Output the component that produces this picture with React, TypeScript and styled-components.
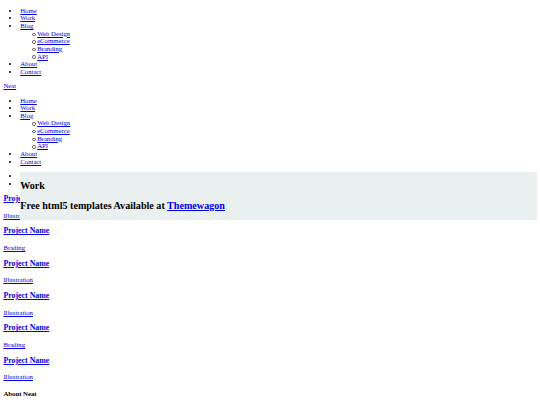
import { createGlobalStyle } from "styled-components"
import styled from "styled-components"

// the page is an unstyled template seen at 1280px wide, shrunk to 540
const K = 540 / 1280
const u = (n: number) => `${(n * K).toFixed(3)}px`

const GlobalStyle = createGlobalStyle`
  html {
    background: #fff;
  }
  body {
    margin: 0 ${u(8)} ${u(8)};
    font-family: "Liberation Serif", "Times New Roman", serif;
    font-size: ${u(16)};
    line-height: 1.13;
    color: #000;
  }
`

const Link = styled.a`
  color: #0000ee;
  text-decoration: underline;
  cursor: pointer;
`

const MenuList = styled.ul`
  margin: ${u(16)} 0;
  padding-left: ${u(40)};
  list-style: disc;
`

const SubMenu = styled.ul`
  margin: 0;
  padding-left: ${u(40)};
  list-style: none;
`

const SubItem = styled.li`
  position: relative;

  &::before {
    content: "";
    position: absolute;
    left: -4.8px;
    top: 2.9px;
    width: 1.6px;
    height: 1.6px;
    border: 0.6px solid #555;
    border-radius: 50%;
  }
`

const Logo = styled.div`
  display: block;
`

const Slider = styled.ul`
  margin: ${u(16)} 0;
  padding-left: ${u(40)};
  list-style: disc;
`

const Slide = styled.li`
  position: relative;
`

const Banner = styled.div`
  position: absolute;
  top: 0;
  left: 0;
  right: 0;
  background: #e9f0ef;
`

const BannerTitle = styled.h2`
  margin: ${u(19.92)} 0;
  font-size: ${u(24)};
  font-weight: bold;
`

const ProjectTitle = styled.h3`
  margin: ${u(18.72)} 0;
  font-size: ${u(18.72)};
  font-weight: bold;
`

const Category = styled.p`
  margin: ${u(16)} 0;
`

const FooterTitle = styled.h4`
  margin: ${u(21.28)} 0;
  font-size: ${u(16)};
  font-weight: bold;
`

const blogItems = ["Web Design", "eCommerce", "Branding", "API"]
const projects = ["Illustration", "Brading", "Illustration", "Illustration", "Brading", "Illustration"]

function Menu() {
  return (
    <MenuList>
      <li><Link>Home</Link></li>
      <li><Link>Work</Link></li>
      <li>
        <Link>Blog</Link>
        <SubMenu>
          {blogItems.map((item) => (
            <SubItem key={item}><Link>{item}</Link></SubItem>
          ))}
        </SubMenu>
      </li>
      <li><Link>About</Link></li>
      <li><Link>Contact</Link></li>
    </MenuList>
  )
}

function App() {
  return (
    <>
      <GlobalStyle />
      <header>
        <nav>
          <Menu />
        </nav>
        <Logo>
          <Link>Neat</Link>
        </Logo>
        <nav>
          <Menu />
        </nav>
      </header>

      <Slider>
        <Slide>
          <Banner>
            <BannerTitle>Work</BannerTitle>
            <BannerTitle>
              Free html5 templates Available at <Link>Themewagon</Link>
            </BannerTitle>
          </Banner>
        </Slide>
        <Slide />
      </Slider>

      <section>
        {projects.map((cat, i) => (
          <div key={i}>
            <ProjectTitle><Link>Project Name</Link></ProjectTitle>
            <Category><Link>{cat}</Link></Category>
          </div>
        ))}
      </section>

      <footer>
        <FooterTitle>About Neat</FooterTitle>
      </footer>
    </>
  )
}

export default App
